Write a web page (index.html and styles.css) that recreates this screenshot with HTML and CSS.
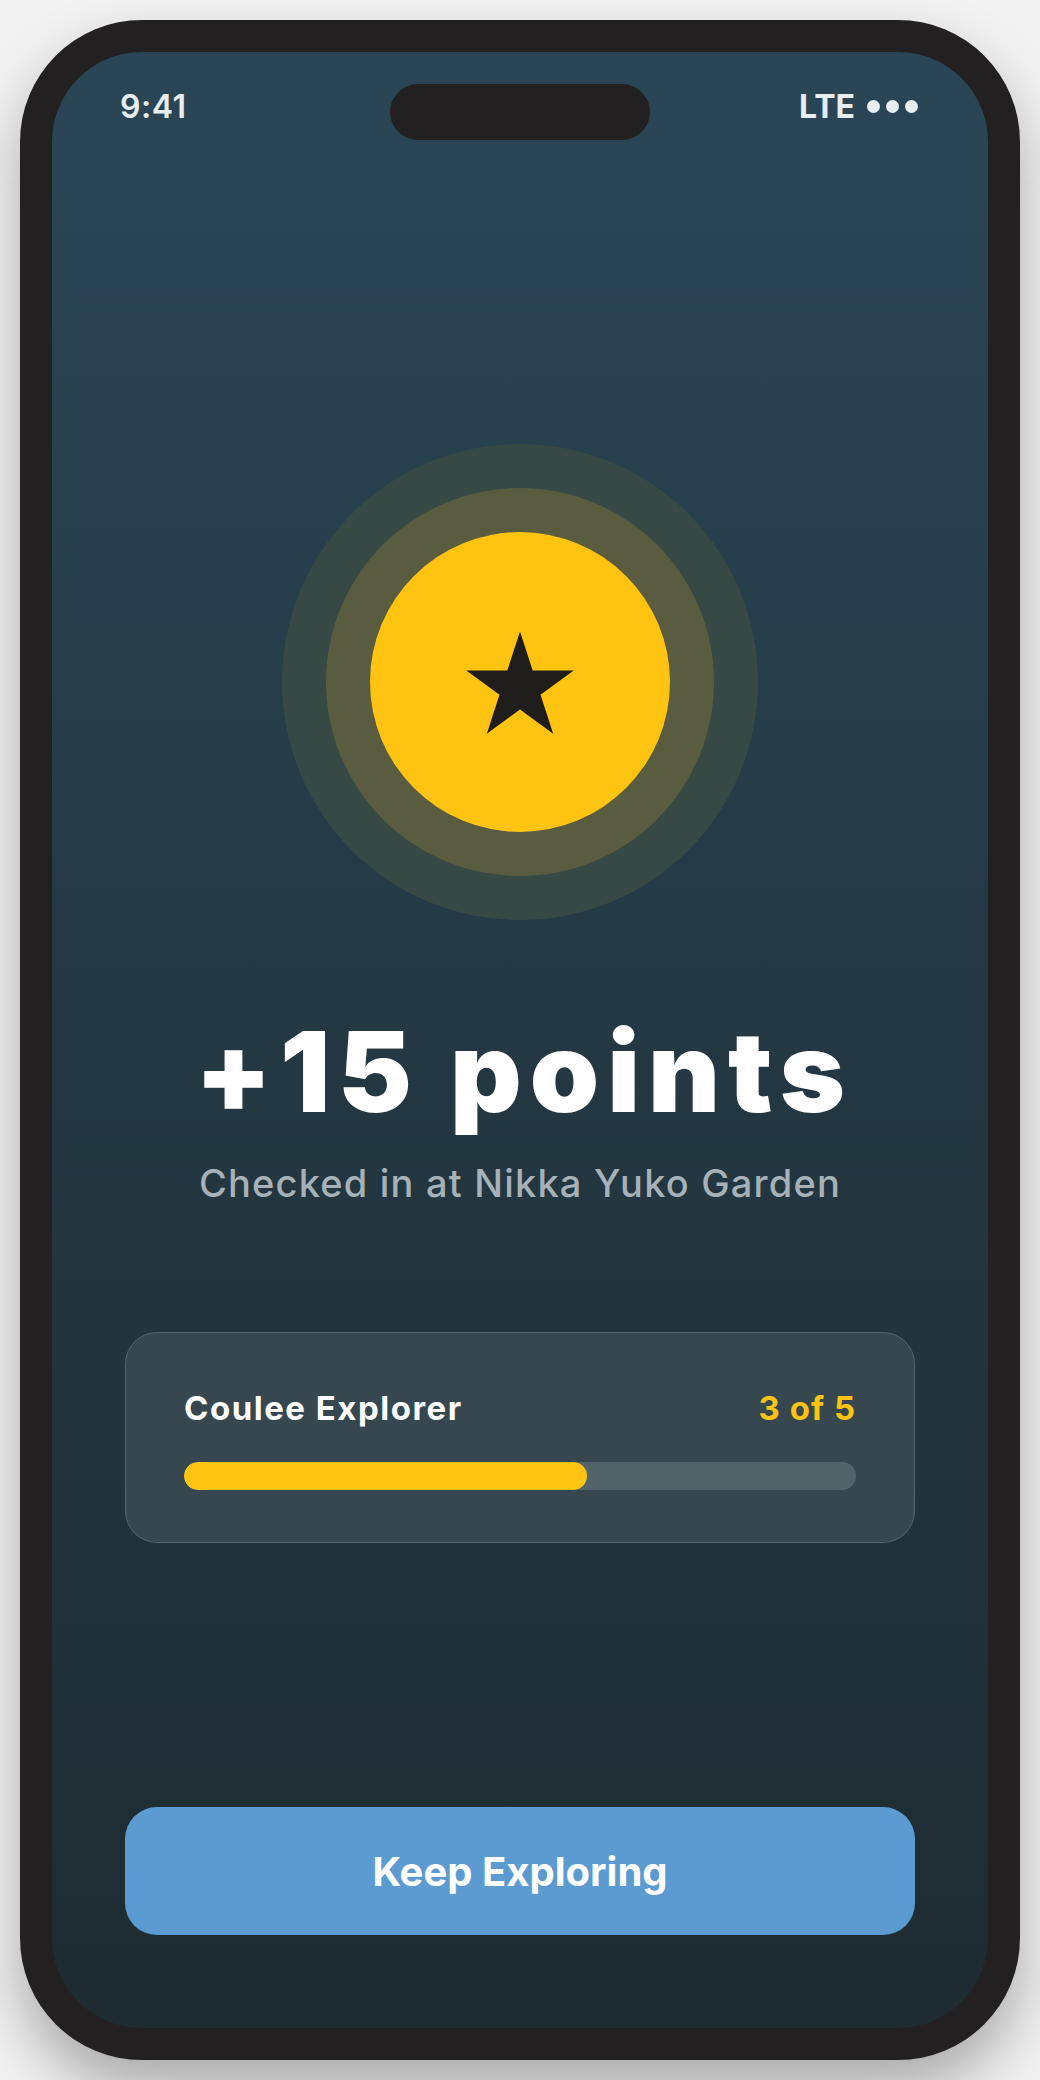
FILE: index.html
```html
<!DOCTYPE html>
<html lang="en">
<head>
  <meta charset="UTF-8">
  <title>Check-in Reward</title>
  <link rel="stylesheet" href="styles.css">
</head>
<body>
  <div class="phone">
    <div class="screen">
      <div class="status-bar">
        <span class="time">9:41</span>
        <div class="island"></div>
        <span class="signal">LTE <span class="dots"><i></i><i></i><i></i></span></span>
      </div>

      <div class="badge">
        <div class="ring-mid">
          <div class="coin">
            <svg class="star" width="120" height="120" viewBox="0 0 120 120">
              <polygon fill="#1f1e1d" points="60,9.5 72.7,48.5 113.7,48.5 80.5,72.7 93.2,111.7 60,87.6 26.8,111.7 39.5,72.7 6.3,48.5 47.3,48.5"/>
            </svg>
          </div>
        </div>
      </div>

      <h1 class="points">+15 points</h1>
      <p class="checked">Checked in at Nikka Yuko Garden</p>

      <div class="progress-card">
        <div class="progress-head">
          <span class="quest">Coulee Explorer</span>
          <span class="count">3 of 5</span>
        </div>
        <div class="track">
          <div class="fill" style="width: 60%;"></div>
        </div>
      </div>

      <button class="cta">Keep Exploring</button>
    </div>
  </div>
</body>
</html>
```

FILE: styles.css
```css
body {
  margin: 0;
  background: #f2f2f2;
  font-family: 'Inter', 'Liberation Sans', sans-serif;
}

.phone {
  width: 1000px;
  height: 2040px;
  margin: 20px auto;
  padding: 32px;
  box-sizing: border-box;
  background: #222020;
  border-radius: 122px;
  box-shadow: 0 30px 60px rgba(0, 0, 0, 0.3);
}

.screen {
  height: 100%;
  border-radius: 90px;
  background: linear-gradient(to bottom, #2a4656, #1e2b31);
  display: flex;
  flex-direction: column;
  align-items: center;
  padding: 32px 73px 93px;
  box-sizing: border-box;
  color: #fff;
}

.status-bar {
  align-self: stretch;
  display: grid;
  grid-template-columns: 1fr 260px 1fr;
  align-items: center;
  height: 56px;
  margin: 0 -3px;
  color: #e8edf0;
  font-size: 32px;
  font-weight: 600;
}

.time {
  justify-self: start;
  padding-bottom: 12px;
  margin-left: -2px;
  letter-spacing: 0.5px;
}

.signal {
  justify-self: end;
  display: flex;
  align-items: center;
  font-weight: 700;
  padding-bottom: 12px;
}

.dots {
  display: flex;
  gap: 6px;
  margin-left: 12px;
}

.dots i {
  width: 13px;
  height: 13px;
  border-radius: 50%;
  background: #e8edf0;
}

.island {
  height: 56px;
  border-radius: 28px;
  background: #222020;
}

.badge {
  width: 476px;
  height: 476px;
  margin-top: 304px;
  border-radius: 50%;
  background: #364944;
  display: grid;
  place-items: center;
}

.ring-mid {
  width: 388px;
  height: 388px;
  border-radius: 50%;
  background: #5a5c3f;
  display: grid;
  place-items: center;
}

.coin {
  width: 300px;
  height: 300px;
  border-radius: 50%;
  background: #ffc312;
  display: grid;
  place-items: center;
}

.points {
  margin: 97px 0 0 8px;
  font-size: 111px;
  line-height: 110px;
  font-weight: 900;
  letter-spacing: 8px;
}

.checked {
  margin: 34px 0 0;
  font-size: 38px;
  line-height: 44px;
  font-weight: 500;
  letter-spacing: 1.2px;
  color: #a6b1b8;
}

.progress-card {
  align-self: stretch;
  margin-top: 127px;
  padding: 56px 58px 52px;
  background: #36474f;
  border: 1px solid #56656c;
  border-radius: 32px;
}

.progress-head {
  display: flex;
  justify-content: space-between;
  align-items: center;
  font-size: 33px;
  line-height: 38px;
  font-weight: 700;
}

.quest {
  letter-spacing: 1.5px;
}

.count {
  letter-spacing: 1px;
  color: #fcc215;
}

.track {
  margin-top: 35px;
  height: 28px;
  border-radius: 14px;
  background: #53636a;
  overflow: hidden;
}

.fill {
  height: 100%;
  border-radius: 14px;
  background: #ffc312;
}

.cta {
  align-self: stretch;
  margin-top: auto;
  height: 128px;
  border: none;
  border-radius: 32px;
  background: #5b9bd1;
  color: #fff;
  font-family: inherit;
  font-size: 40px;
  font-weight: 700;
  cursor: pointer;
}
```
